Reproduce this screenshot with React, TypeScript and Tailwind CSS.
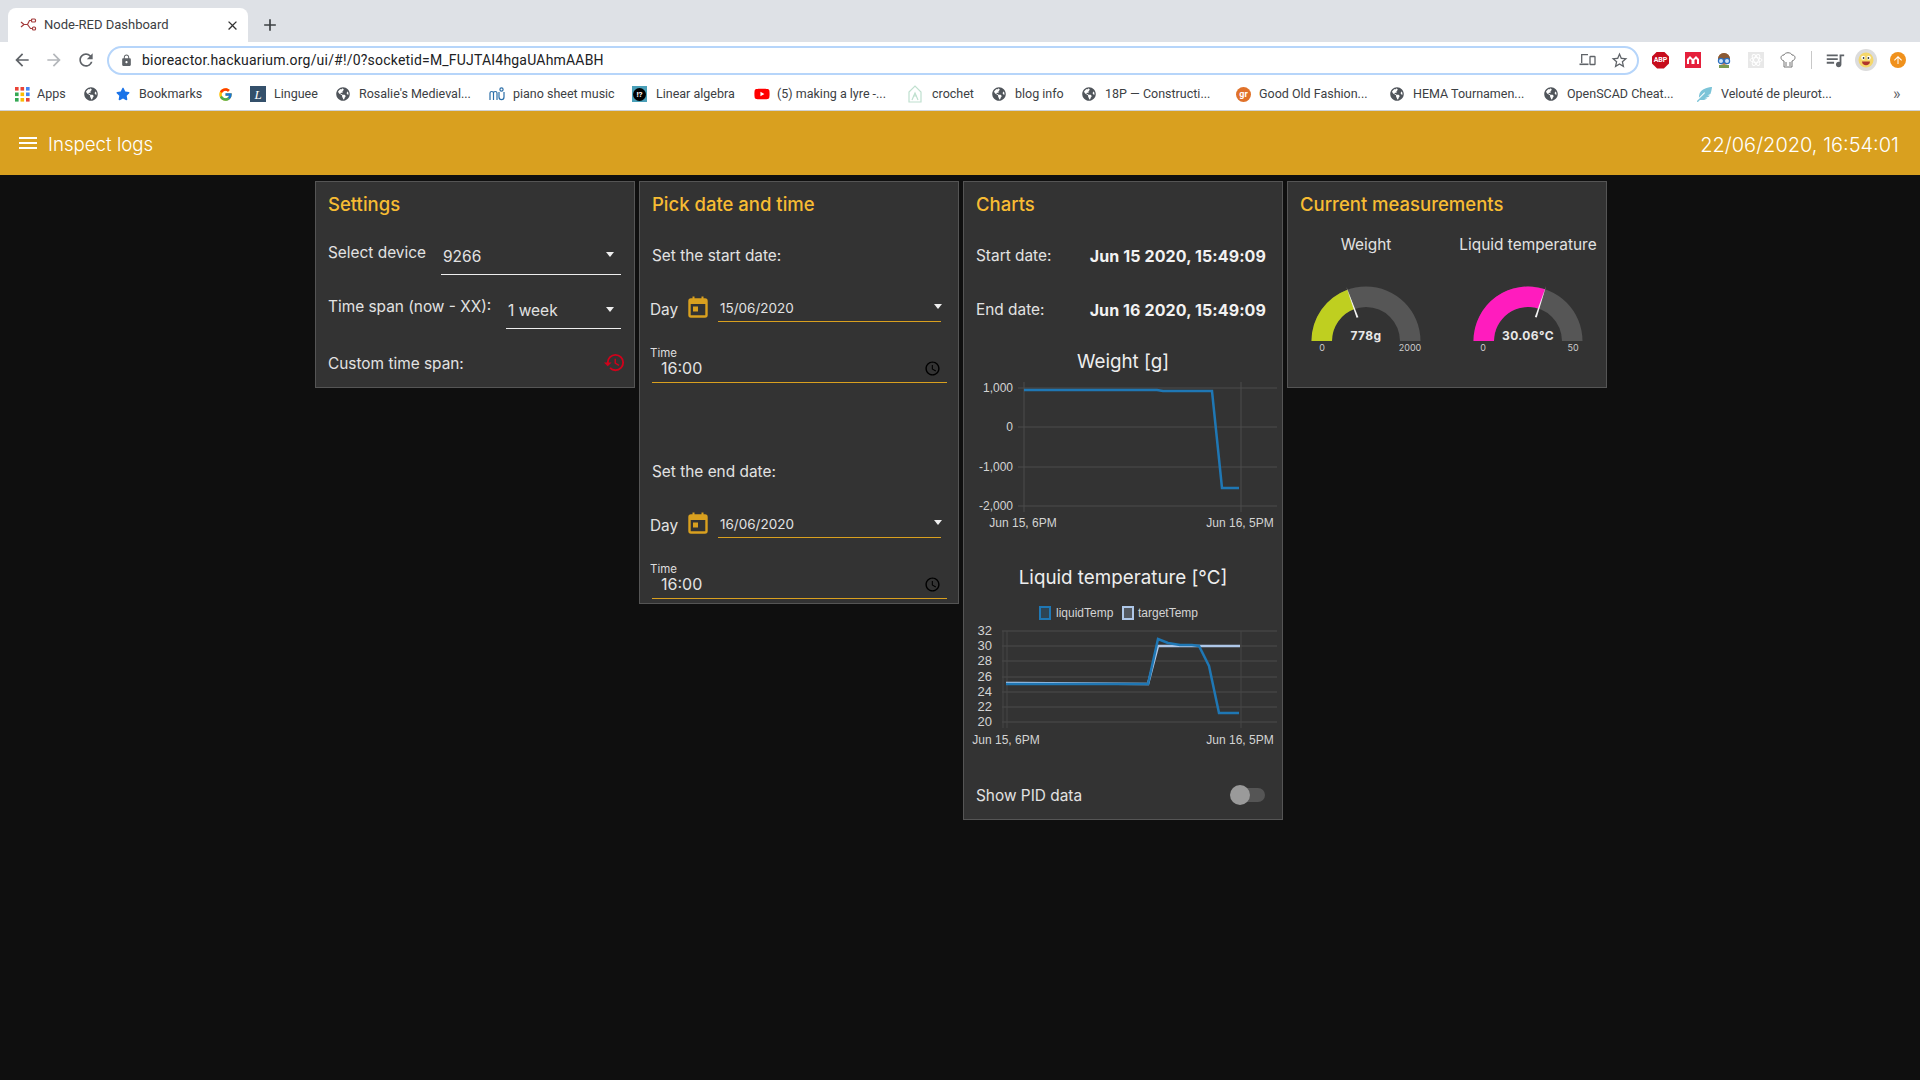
import React from "react";
import { FaGlobeAmericas, FaStar, FaYoutube, FaFeatherAlt } from "react-icons/fa";
import { FcGoogle } from "react-icons/fc";
import {
  MdArrowBack, MdArrowForward, MdRefresh, MdLock, MdStarBorder, MdClose, MdAdd, MdMenu,
  MdHistory, MdAccessTime, MdOutlineQueueMusic, MdArrowUpward,
} from "react-icons/md";

const Globe = () => <FaGlobeAmericas className="text-[14px] text-[#50555b]" />;

const AppsIcon = () => (
  <svg width="15" height="15" viewBox="0 0 15 15">
    {[0, 1, 2].flatMap((r) =>
      [0, 1, 2].map((c) => (
        <rect key={`${r}${c}`} x={c * 5.5} y={r * 5.5} width="3.6" height="3.6"
          fill={["#ea4335", "#ea4335", "#4285f4", "#34a853", "#fbbc04", "#4285f4", "#34a853", "#fbbc04", "#ea4335"][r * 3 + c]} />
      ))
    )}
  </svg>
);

const Linguee = () => (
  <div className="w-[16px] h-[16px] bg-[#34506b] flex items-center justify-center text-white text-[13px] leading-none italic font-['Liberation_Serif',serif]">L</div>
);
const Piano = () => (
  <svg width="16" height="16" viewBox="0 0 16 16" fill="none" stroke="#2b6ea8" strokeWidth="1.2">
    <path d="M1 14V7c0-2 3.5-2 3.5 0v7M4.5 7c0-2 3.5-2 3.5 0v7" />
    <path d="M10 6v5c0 3.5 5 3.5 5 0V6" />
    <circle cx="12.5" cy="3.5" r="1.6" />
  </svg>
);
const Quiz = () => (
  <div className="w-[15px] h-[16px] bg-[#4a9fb8] flex items-center justify-center">
    <div className="w-[13px] h-[13px] rounded-full bg-black text-white text-[8px] leading-[13px] text-center font-bold">!?</div>
  </div>
);
const Crochet = () => (
  <svg width="14" height="18" viewBox="0 0 14 18" fill="none" stroke="#bfe0cf" strokeWidth="1.2">
    <path d="M1 17V7l6-6 6 6v10z" />
    <path d="M4 15l3-7 3 7M5 11h4" />
  </svg>
);
const GoodOld = () => (
  <div className="w-[15px] h-[15px] rounded-full bg-[#e0722a] text-white text-[9px] leading-[15px] text-center font-bold">gr</div>
);
const NodeRed = () => (
  <svg width="17" height="14" viewBox="0 0 17 14" fill="none" stroke="#a33a3a" strokeWidth="1.2">
    <path d="M1 4l3 2.5L1 9M4 6.5h3.5l2-4h2M7.5 6.5l3 4h2" />
    <rect x="11.5" y="1" width="4" height="3" rx="1" />
    <rect x="12.5" y="9" width="3" height="3" rx="1" />
  </svg>
);
const DeviceIcon = () => (
  <svg width="17" height="14" viewBox="0 0 17 14" fill="none" stroke="#5f6368" strokeWidth="1.3">
    <path d="M9 1.7H2.7v8.2" />
    <path d="M.5 11.3h9" strokeWidth="1.6" />
    <rect x="11" y="3.5" width="5" height="8" rx=".6" />
  </svg>
);
const CalendarIcon = () => (
  <svg className="block" width="20" height="22" viewBox="0 0 20 22">
    <rect x="1.5" y="3.5" width="17" height="17" rx="1.5" fill="none" stroke="#d9a01f" strokeWidth="2.4" />
    <rect x="1" y="3" width="18" height="5" fill="#d9a01f" />
    <rect x="4.5" y="0.5" width="2" height="4" fill="#d9a01f" />
    <rect x="13.5" y="0.5" width="2" height="4" fill="#d9a01f" />
    <rect x="5" y="10.5" width="5" height="5" fill="#d9a01f" />
  </svg>
);

const bookmarks = [
  { w: "w-[69px]", icon: <AppsIcon />, label: "Apps", gap: "ml-[7px]" },
  { w: "w-[32px]", icon: <Globe />, label: "", gap: "" },
  { w: "w-[105px]", icon: <FaStar className="text-[14px] text-[#1a73e8]" />, label: "Bookmarks", gap: "ml-[9px]" },
  { w: "w-[29px]", icon: <FcGoogle className="text-[15px] -ml-[3px]" />, label: "", gap: "" },
  { w: "w-[86px]", icon: <Linguee />, label: "Linguee", gap: "ml-[8px]" },
  { w: "w-[153px]", icon: <Globe />, label: "Rosalie's Medieval...", gap: "ml-[9px]" },
  { w: "w-[143px]", icon: <Piano />, label: "piano sheet music", gap: "ml-[8px]" },
  { w: "w-[122px]", icon: <Quiz />, label: "Linear algebra", gap: "ml-[9px]" },
  { w: "w-[154px]", icon: <FaYoutube className="text-[16px] text-[#ff0000]" />, label: "(5) making a lyre -...", gap: "ml-[7px]" },
  { w: "w-[84px]", icon: <Crochet />, label: "crochet", gap: "ml-[10px]" },
  { w: "w-[90px]", icon: <Globe />, label: "blog info", gap: "ml-[9px]" },
  { w: "w-[154px]", icon: <Globe />, label: "18P — Constructi...", gap: "ml-[9px]" },
  { w: "w-[154px]", icon: <GoodOld />, label: "Good Old Fashion...", gap: "ml-[8px]" },
  { w: "w-[154px]", icon: <Globe />, label: "HEMA Tournamen...", gap: "ml-[9px]" },
  { w: "w-[153px]", icon: <Globe />, label: "OpenSCAD Cheat...", gap: "ml-[9px]" },
  { w: "w-[196px]", icon: <FaFeatherAlt className="text-[15px] text-[#7cc4d8]" />, label: "Velouté de pleurot...", gap: "ml-[9px]" },
];

function Extensions() {
  return (
    <div className="flex items-center">
      <div className="w-[17px] h-[17px] bg-[#c70d1d] text-white text-[7px] font-bold leading-[17px] text-center [clip-path:polygon(30%_0,70%_0,100%_30%,100%_70%,70%_100%,30%_100%,0_70%,0_30%)]">ABP</div>
      <div className="ml-[16px] w-[16px] h-[16px] bg-[#e5203c] flex items-center justify-center">
        <svg width="12" height="10" viewBox="0 0 12 10" fill="white"><path d="M0 9V4l3-3 3 3 3-3 3 3v5h-2V5L9 4 7.5 5v4h-3V5L3 4 2 5v4z" /></svg>
      </div>
      <svg className="ml-[15px]" width="16" height="16" viewBox="0 0 16 16">
        <circle cx="8" cy="7" r="6" fill="#b87a50" />
        <path d="M2 7a6 6 0 0 1 12 0z" fill="#8a5a34" />
        <circle cx="5" cy="9" r="2.6" fill="#cfe4f7" stroke="#2a6fc0" strokeWidth="1.2" />
        <circle cx="11" cy="9" r="2.6" fill="#cfe4f7" stroke="#2a6fc0" strokeWidth="1.2" />
        <rect x="3" y="13" width="10" height="3" fill="#7a9a50" />
      </svg>
      <div className="ml-[16px] w-[16px] h-[16px] bg-[#e8e8e8] flex items-center justify-center">
        <svg width="14" height="14" viewBox="0 0 14 14" fill="none" stroke="#fff" strokeWidth="1">
          <ellipse cx="7" cy="7" rx="6" ry="2.4" />
          <ellipse cx="7" cy="7" rx="6" ry="2.4" transform="rotate(60 7 7)" />
          <ellipse cx="7" cy="7" rx="6" ry="2.4" transform="rotate(120 7 7)" />
        </svg>
      </div>
      <svg className="ml-[16px]" width="16" height="18" viewBox="0 0 16 18" fill="#fff" stroke="#777" strokeWidth="1">
        <path d="M4 10C0 9 0 4 4 4c1-3 7-3 8 0 4 0 4 5 0 6v6H4z" />
        <path d="M6 11v4M10 11v4" />
      </svg>
      <div className="ml-[15px] w-px h-[18px] bg-[#c8c8c8]" />
      <MdOutlineQueueMusic className="ml-[12px] text-[22px] text-[#5f6368]" />
      <div className="ml-[9px] w-[22px] h-[22px] rounded-full bg-[#dcdcdc] flex items-center justify-center">
        <svg width="16" height="16" viewBox="0 0 16 16">
          <circle cx="8" cy="8" r="7.5" fill="#f5d76a" />
          <circle cx="5.2" cy="5.8" r="2" fill="#fff" /><circle cx="10.8" cy="5.8" r="2" fill="#fff" />
          <circle cx="5.6" cy="6" r=".9" fill="#333" /><circle cx="10.4" cy="6" r=".9" fill="#333" />
          <path d="M4 9.5h8c0 5-8 5-8 0z" fill="#b0342c" />
        </svg>
      </div>
      <div className="ml-[13px] w-[16px] h-[16px] rounded-full bg-[#f0911c] flex items-center justify-center">
        <MdArrowUpward className="text-[12px] text-white" />
      </div>
    </div>
  );
}

function BrowserChrome() {
  return (
    <div className="font-['Roboto',sans-serif] text-[#3c4043]">
      <div className="h-[42px] bg-[#dee1e6] flex items-end pl-[8px]">
        <div className="w-[240px] h-[34px] bg-white rounded-t-[8px] flex items-center pl-[12px] pr-[8px]">
          <NodeRed />
          <span className="ml-[7px] text-[13px] flex-1">Node-RED Dashboard</span>
          <MdClose className="text-[15px] text-[#333]" />
        </div>
        <div className="h-[34px] flex items-center ml-[12px]">
          <MdAdd className="text-[20px] text-[#3c4043]" />
        </div>
      </div>
      <div className="h-[36px] bg-white flex items-center pl-[12px] pr-[14px]">
        <MdArrowBack className="text-[20px] text-[#5f6368]" />
        <MdArrowForward className="ml-[12px] text-[20px] text-[#b4b7bb]" />
        <MdRefresh className="ml-[12px] text-[20px] text-[#5f6368]" />
        <div className="ml-[11px] w-[1532px] h-[29px] rounded-full border-2 border-[#b6d5fa] flex items-center pl-[11px] pr-[8px]">
          <MdLock className="text-[13px] text-[#5f6368]" />
          <span className="ml-[9px] text-[14px] text-[#202124] flex-1 tracking-[0.2px]">bioreactor.hackuarium.org/ui/#!/0?socketid=M_FUJTAI4hgaUAhmAABH</span>
          <DeviceIcon />
          <MdStarBorder className="ml-[14px] text-[19px] text-[#5f6368]" />
        </div>
        <div className="ml-[13px]"><Extensions /></div>
      </div>
      <div className="h-[33px] bg-white border-b border-[#cfd2d6] flex items-center pl-[15px] text-[12.5px] text-[#3c4043]">
        {bookmarks.map((b, i) => (
          <div key={i} className={`${b.w} flex items-center shrink-0`}>
            <div className="shrink-0 flex items-center">{b.icon}</div>
            {b.label && <span className={`${b.gap} whitespace-nowrap`}>{b.label}</span>}
          </div>
        ))}
        <span className="text-[16px] text-[#5f6368]">»</span>
      </div>
    </div>
  );
}

const Caret = ({ className = "" }: { className?: string }) => (
  <div className={`w-0 h-0 border-x-[4.5px] border-t-[5px] border-x-transparent border-t-[#eee] ${className}`} />
);

function Panel({ title, children }: { title: string; children: React.ReactNode }) {
  return (
    <div className="w-[320px] shrink-0 border border-[#555] bg-[#333]">
      <div className="h-[44px] pl-[12px] pt-[2px] flex items-center text-[18.5px] font-medium text-[#f7bc33]">{title}</div>
      {children}
    </div>
  );
}

function Settings() {
  return (
    <Panel title="Settings">
      <div className="pl-[12px] pr-[13px]">
        <div className="flex justify-between h-[49px] mb-[4px]">
          <span className="pt-[17px] leading-[20px] text-[15.4px]">Select device</span>
          <div className="w-[180px] border-b border-[#eee] flex justify-between pl-[2px] pr-[7px] pt-[21px]">
            <span className="leading-[20px] text-[15.5px]">9266</span>
            <Caret className="mt-[5px]" />
          </div>
        </div>
        <div className="flex justify-between h-[50px]">
          <span className="pt-[18px] leading-[20px] text-[15.4px]">Time span (now - XX):</span>
          <div className="w-[115px] border-b border-[#eee] flex justify-between pl-[2px] pr-[7px] pt-[22px]">
            <span className="leading-[20px] text-[15.5px]">1 week</span>
            <Caret className="mt-[6px]" />
          </div>
        </div>
        <div className="flex justify-between items-start h-[58px] pt-[25px]">
          <span className="leading-[20px] text-[15.4px]">Custom time span:</span>
          <MdHistory className="text-[23px] text-[#d0021b] -mr-[5px] -mt-[3px]" />
        </div>
      </div>
    </Panel>
  );
}

function DateBlock({ label, date }: { label: string; date: string }) {
  return (
    <div>
      <div className="h-[60px] pl-[12px] flex items-center text-[15.4px] leading-[20px]">{label}</div>
      <div className="h-[36px] flex pl-[10px]">
        <span className="pt-[14px] text-[15.4px] leading-[20px] w-[38px]">Day</span>
        <div className="pt-[10px] w-[30px]"><CalendarIcon /></div>
        <div className="w-[223px] border-b border-[#d9a01f] pl-[2px] pt-[12px] flex justify-between">
          <span className="text-[13.5px] leading-[20px]">{date}</span>
          <Caret className="mt-[6px] -mr-[1px]" />
        </div>
      </div>
      <div className="ml-[12px] w-[295px] h-[61px] border-b border-[#d9a01f] pt-[24px]">
        <div className="-ml-[2px] text-[11.5px] leading-[14px] text-[#ddd]">Time</div>
        <div className="flex justify-between items-center h-[17px] pl-[9px] pr-[6px]">
          <span className="text-[16px] leading-[17px]">16:00</span>
          <MdAccessTime className="text-[17px] text-black" />
        </div>
      </div>
    </div>
  );
}

function DatePanel() {
  return (
    <Panel title="Pick date and time">
      <DateBlock label="Set the start date:" date="15/06/2020" />
      <div className="h-[59px]" />
      <DateBlock label="Set the end date:" date="16/06/2020" />
      <div className="h-[4px]" />
    </Panel>
  );
}

const tick = "fill-[#d4d4d4] text-[12px] font-['Liberation_Sans',sans-serif]";

function WeightChart() {
  const ys: [number, string][] = [[388, "1,000"], [427, "0"], [467, "-1,000"], [506, "-2,000"]];
  return (
    <svg className="block w-[318px] h-[162px]" viewBox="964 374 318 162">
      {ys.map(([y]) => <line key={y} x1="1018" x2="1277" y1={y} y2={y} stroke="#4d4d4d" />)}
      {[1024, 1241].map((x) => <line key={x} x1={x} x2={x} y1="382" y2="512" stroke="#4d4d4d" />)}
      {ys.map(([y, t]) => <text key={t} x="1013" y={y + 4} textAnchor="end" className={tick}>{t}</text>)}
      <text x="1023" y="527" textAnchor="middle" className={tick}>Jun 15, 6PM</text>
      <text x="1240" y="527" textAnchor="middle" className={tick}>Jun 16, 5PM</text>
      <polyline fill="none" stroke="#1f77b4" strokeWidth="2.5"
        points="1024,390 1157,390 1163,391 1212,391 1222,488 1239,488" />
    </svg>
  );
}

function TempChart() {
  const ys: [number, string][] = [[631, "32"], [646, "30"], [661, "28"], [677, "26"], [692, "24"], [707, "22"], [722, "20"]];
  return (
    <svg className="block w-[318px] h-[170px]" viewBox="964 590 318 170">
      <rect x="1040" y="607" width="10" height="12" fill="#1f77b4" fillOpacity=".25" stroke="#1f77b4" strokeWidth="2" />
      <text x="1056" y="617" className={tick}>liquidTemp</text>
      <rect x="1123" y="607" width="10" height="12" fill="#aec7e8" fillOpacity=".25" stroke="#aec7e8" strokeWidth="2" />
      <text x="1138" y="617" className={tick}>targetTemp</text>
      {ys.map(([y]) => <line key={y} x1="1002" x2="1277" y1={y} y2={y} stroke="#4d4d4d" />)}
      {[1003, 1007, 1241].map((x) => <line key={x} x1={x} x2={x} y1="631" y2="728" stroke="#474747" />)}
      {ys.map(([y, t]) => <text key={t} x="992" y={y + 4} textAnchor="end" className={`${tick} text-[13px]`}>{t}</text>)}
      <text x="1006" y="744" textAnchor="middle" className={tick}>Jun 15, 6PM</text>
      <text x="1240" y="744" textAnchor="middle" className={tick}>Jun 16, 5PM</text>
      <polyline fill="none" stroke="#aec7e8" strokeWidth="2.5" points="1006,683 1148,684 1158,646 1240,646" />
      <polyline fill="none" stroke="#1f77b4" strokeWidth="2.5"
        points="1006,684 1148,684 1158,639 1168,643 1180,645 1192,645 1199,646 1209,666 1219,713 1239,713" />
    </svg>
  );
}

function ChartsPanel() {
  return (
    <Panel title="Charts">
      <div className="h-[60px] pl-[12px] pr-[16px] flex items-center justify-between text-[15.4px]">
        <span>Start date:</span><span className="font-bold text-[16px] tracking-[0.1px] text-[#f2f2f2]">Jun 15 2020, 15:49:09</span>
      </div>
      <div className="h-[48px] pl-[12px] pr-[16px] flex items-center justify-between text-[15.4px]">
        <span>End date:</span><span className="font-bold text-[16px] tracking-[0.1px] text-[#f2f2f2]">Jun 16 2020, 15:49:09</span>
      </div>
      <div className="mt-[16px] h-[24px] leading-[24px] text-center text-[18.8px] text-[#eee]">Weight [g]</div>
      <WeightChart />
      <div className="mt-[30px] h-[24px] leading-[24px] text-center text-[18.8px] text-[#eee]">Liquid temperature [°C]</div>
      <TempChart />
      <div className="h-[59px] pl-[12px] pr-[17px] pt-[26px] flex justify-between text-[15.4px] leading-[20px]">
        <span>Show PID data</span>
        <div className="relative w-[35px] h-[14px] mt-[2px]">
          <div className="absolute right-0 top-0 w-[30px] h-[14px] rounded-full bg-[#555]" />
          <div className="absolute left-0 -top-[3px] w-[20px] h-[20px] rounded-full bg-[#9a9a9a]" />
        </div>
      </div>
    </Panel>
  );
}

function arc(r1: number, r2: number, a0: number, a1: number) {
  const p = (r: number, a: number) => `${(-r * Math.cos(a)).toFixed(2)} ${(-r * Math.sin(a)).toFixed(2)}`;
  return `M${p(r1, a0)} A${r1} ${r1} 0 0 1 ${p(r1, a1)} L${p(r2, a1)} A${r2} ${r2} 0 0 0 ${p(r2, a0)} Z`;
}

function Gauge({ title, value, max, color, frac, minX, maxX }: {
  title: string; value: string; max: string; color: string; frac: number; minX: number; maxX: number;
}) {
  const a = Math.PI * frac;
  const ux = -Math.cos(a), uy = -Math.sin(a), nx = -uy, ny = ux;
  const pt = (r: number, w: number) => `${(ux * r + nx * w).toFixed(2)},${(uy * r + ny * w).toFixed(2)}`;
  return (
    <div className="w-[156px] shrink-0">
      <div className="h-[38px] flex items-center justify-center whitespace-nowrap text-[15.4px] leading-[20px]">{title}</div>
      <svg className="block w-[156px] h-[123px]" viewBox="-78 -77 156 123">
        <path d={arc(54.5, 34, 0, Math.PI)} fill="#565656" />
        <path d={arc(54.5, 34, 0, a)} fill={color} />
        <polygon points={`${pt(25, 1)} ${pt(25, -1)} ${pt(58, 0)}`} fill="#f4f4f4" />
        <text x="0" y="-1" textAnchor="middle" className="fill-[#e8e8e8] text-[12px] font-bold tracking-[0.4px] font-['Inter',sans-serif]">{value}</text>
        <text x={minX} y="10" textAnchor="middle" className="fill-[#ccc] text-[9px] font-['Inter',sans-serif]">0</text>
        <text x={maxX} y="10" textAnchor="middle" className="fill-[#ccc] text-[9px] font-['Inter',sans-serif]">{max}</text>
      </svg>
    </div>
  );
}

function GaugePanel() {
  return (
    <Panel title="Current measurements">
      <div className="flex gap-[6px]">
        <Gauge title="Weight" value="778g" max="2000" color="#bfcf20" frac={0.389} minX={-44} maxX={44} />
        <Gauge title="Liquid temperature" value="30.06°C" max="50" color="#ff1cbe" frac={0.601} minX={-45} maxX={45} />
      </div>
    </Panel>
  );
}

export default function App() {
  return (
    <div className="w-[1920px] h-[1080px] overflow-hidden bg-[#0f0f0f] font-['Inter',sans-serif] text-[#e2e2e2] flex flex-col">
      <BrowserChrome />
      <header className="h-[64px] bg-[#d9a01f] flex items-center text-white">
        <MdMenu className="ml-[16px] text-[24px]" />
        <span className="ml-[8px] pt-[4px] text-[18.7px] font-light">Inspect logs</span>
        <span className="ml-auto mr-[21px] pt-[3px] text-[20px] font-light">22/06/2020, 16:54:01</span>
      </header>
      <main className="flex items-start gap-[4px] pt-[6px] pl-[315px]">
        <Settings />
        <DatePanel />
        <ChartsPanel />
        <GaugePanel />
      </main>
    </div>
  );
}
